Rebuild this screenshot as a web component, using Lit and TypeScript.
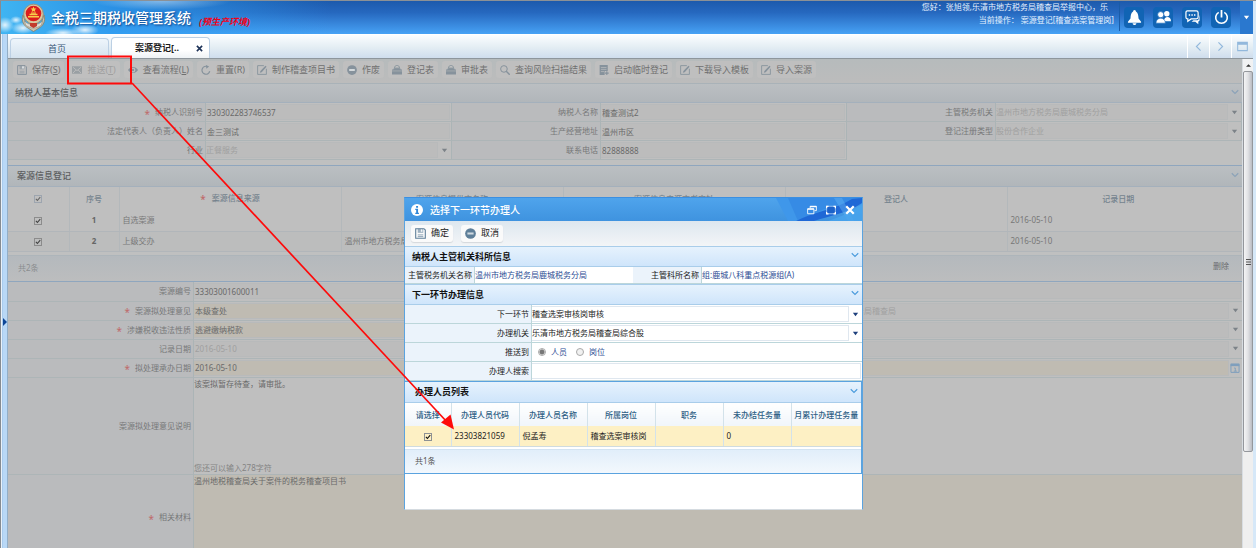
import { LitElement, html, svg, css, nothing } from "lit";
import { customElement } from "lit/decorators.js";
import { classMap } from "lit/directives/class-map.js";

const icons: Record<string, unknown> = {
  save: svg`<path d="M1 1h12l2 2v12H1z" fill="none" stroke="currentColor" stroke-width="1.600"/><path d="M4 1h8v6H4z" fill="currentColor" opacity=".6"/><path d="M8.500 2h2.200v3.500H8.500z" fill="#f4f6f8"/><path d="M4 10h8M4 12.500h8" stroke="currentColor" stroke-width="1"/>`,
  mail: svg`<path d="M0 2h16v12H0z" fill="currentColor"/><path d="M1.500 3.500 8 9l6.500-5.500M1.500 13 6 8M14.500 13 10 8" fill="none" stroke="#c2c2c2" stroke-width="1.300"/>`,
  eye: svg`<path d="M0 8C4 1.500 12 1.500 16 8 12 14.500 4 14.500 0 8z" fill="currentColor"/><circle cx="8" cy="8" r="3.800" fill="#c2c2c2"/><circle cx="8" cy="8" r="2" fill="currentColor"/>`,
  reset: svg`<path d="M14 10A6.300 6.300 0 1 1 9 2.200" fill="none" stroke="currentColor" stroke-width="1.900"/><path d="M8 0l5 2.500-4.500 3.500z" fill="currentColor"/>`,
  edit: svg`<path d="M15 6v9H1V1h10" fill="none" stroke="currentColor" stroke-width="1.400"/><path d="M4.500 12.500l1-3L13.500 1l1.800 1.700L7.500 11.500z" fill="currentColor"/>`,
  minus: svg`<circle cx="8" cy="8" r="7.800" fill="currentColor"/><path d="M3.500 6.500h9v3h-9z" fill="#eef1f3" opacity=".8"/>`,
  print: svg`<path d="M4 5c0-6 8-6 8 0z" fill="none" stroke="currentColor" stroke-width="1.400"/><path d="M3 5h10l1 2h2v8H0V7h2z" fill="currentColor"/><path d="M0 9.500h16" stroke="#c2c2c2" stroke-width=".8"/>`,
  search: svg`<circle cx="6.300" cy="6.300" r="5.300" fill="none" stroke="currentColor" stroke-width="1.600"/><path d="M10 10l5.500 5.500" stroke="currentColor" stroke-width="2.200"/>`,
  list: svg`<path d="M1 0h13v9.500H9V16H1z" fill="currentColor"/><path d="M3 4h9M3 7h9M3 10.500h5" stroke="#c2c2c2"/><path d="M12.500 10v6M9.500 13h6" stroke="currentColor" stroke-width="1.800"/>`,
  bell: svg`<path d="M8 0c1 0 1.500.8 1.500 1.600C12 3 12 6 12.300 9L15 12.500v1H1v-1L3.700 9C4 6 4 3 6.500 1.600 6.500.8 7 0 8 0zM6 14h4c0 2.500-4 2.500-4 0z" fill="#fff"/>`,
  users: svg`<circle cx="11.500" cy="4" r="2.900" fill="#fff"/><path d="M8.500 12c0-6 7.500-6 7.500 0z" fill="#fff"/><circle cx="5" cy="5" r="3.300" fill="#fff" stroke="#1466b8" stroke-width=".8"/><path d="M0 14c0-7 10-7 10 0z" fill="#fff" stroke="#1466b8" stroke-width=".6"/>`,
  chat: svg`<path d="M2.500 1h9.500c1.200 0 2 .8 2 2v4.500c0 1.200-.8 2-2 2H6.500L3 12V9.500c-1.500 0-2-.8-2-2V3c0-1.200.5-2 1.500-2z" fill="none" stroke="#fff" stroke-width="1.300"/><path d="M4 5.300h1.500M6.800 5.300h1.500M9.600 5.300h1.500" stroke="#fff" stroke-width="1.400"/><path d="M15.500 5v6c0 .8-.5 1.200-1.300 1.200v3L11 12.400H7l2-1.600h4.500c.7 0 1-.5 1-1z" fill="#fff"/>`,
  power: svg`<path d="M5 2.500a6.200 6.200 0 1 0 6 0" fill="none" stroke="#fff" stroke-width="1.700"/><path d="M8 0v8" stroke="#fff" stroke-width="1.900"/>`,
  left: svg`<path d="M11 2 5 8l6 6" fill="none" stroke="currentColor" stroke-width="1.700"/>`,
  right: svg`<path d="M5 2l6 6-6 6" fill="none" stroke="currentColor" stroke-width="1.700"/>`,
  down: svg`<path d="M1.500 4.500 8 11l6.500-6.500" fill="none" stroke="currentColor" stroke-width="2.200"/>`,
  window: svg`<path d="M1 2h14v12H1z" fill="none" stroke="currentColor" stroke-width="1.500"/><path d="M1 2h14v3.500H1z" fill="currentColor"/>`,
  caret: svg`<path d="M2 4h12l-6 8z" fill="currentColor"/>`,
  calendar: svg`<path d="M1.500 2h13v13h-13z" fill="none" stroke="currentColor" stroke-width="1.600"/><path d="M1 1h14v4H1z" fill="currentColor"/><path d="M6.500 8H8.500v5M6 13h5" fill="none" stroke="currentColor" stroke-width="1.400"/>`,
  info: svg`<circle cx="8" cy="8" r="8" fill="#fff"/><path d="M6.800 2.600h2.600v2.300H6.800zM5.700 6.300h3.700v5.400h1.200v1.600H5.700v-1.600h1.200V7.900H5.700z" fill="#2f86d8"/>`,
  restore: svg`<path d="M5 5V2h10v7h-3" fill="none" stroke="#fff" stroke-width="1.400"/><path d="M1 6h10v8H1z" fill="none" stroke="#fff" stroke-width="1.400"/><path d="M1 6.500h10M5 2.500h10" stroke="#fff" stroke-width="2"/>`,
  maximize: svg`<path d="M1 2h14v12H1z" fill="#1d62c9" stroke="#b9dafa" stroke-width="1.200"/><path d="M1 5V2h3M12 2h3v3M15 11v3h-3M4 14H1v-3" fill="none" stroke="#fff" stroke-width="2"/>`,
  close: svg`<path d="M2 2l12 12M14 2 2 14" stroke="currentColor" stroke-width="3.600"/>`,
};

const icon = (name: string, cls = "") =>
  html`<svg class="icon ${cls}" viewBox="0 0 16 16" aria-hidden="true">${icons[name]}</svg>`;

interface Field {
  id: string;
  label: string;
  value: string;
  kind?: "text" | "select" | "date";
  required?: boolean;
  disabled?: boolean;
  cls?: string;
}

const tools: [string, string, string?][] = [
  ["save", "保存", "S"],
  ["mail", "推送", "T"],
  ["eye", "查看流程", "L"],
  ["reset", "重置(R)"],
  ["edit", "制作稽查项目书"],
  ["minus", "作废"],
  ["print", "登记表"],
  ["print", "审批表"],
  ["search", "查询风险扫描结果"],
  ["list", "启动临时登记"],
  ["edit", "下载导入模板"],
  ["edit", "导入案源"],
];

const taxpayer: Field[] = [
  { id: "taxid", label: "纳税人识别号", value: "330302283746537", required: true },
  { id: "taxname", label: "纳税人名称", value: "稽查测试2" },
  { id: "org", label: "主管税务机关", value: "温州市地方税务局鹿城税务分局", kind: "select", disabled: true },
  { id: "legal", label: "法定代表人（负责人）姓名", value: "金三测试" },
  { id: "addr", label: "生产经营地址", value: "温州市区" },
  { id: "regtype", label: "登记注册类型", value: "股份合作企业", kind: "select", disabled: true },
  { id: "trade", label: "行业", value: "正餐服务", kind: "select", disabled: true },
  { id: "phone", label: "联系电话", value: "82888888" },
];

const sources = [
  { no: 1, source: "自选案源", provider: "", date: "2016-05-10" },
  { no: 2, source: "上级交办", provider: "温州市地方税务局", date: "2016-05-10" },
];

@customElement("app-root")
export class AppRoot extends LitElement {
  static styles = css`
    :host {
      display: block;
      height: 100vh;
      overflow: hidden;
      position: relative;
      font: 8px/12px "Noto Sans", "Noto Sans CJK SC", sans-serif;
      color: #787878;
    }
    * { box-sizing: border-box; }
    button, input, select, textarea {
      font: inherit;
      color: inherit;
      margin: 0;
      padding: 0;
      border: 0;
      border-radius: 0;
      background: none;
      appearance: none;
      min-width: 0;
      outline-offset: -1px;
    }
    select, input:disabled { opacity: 1; }
    .icon { width: 11px; height: 11px; flex: none; display: block; }

    .shell {
      height: 100%;
      display: grid;
      grid-template-columns: 8px 1fr 3px;
      grid-template-rows: 33px 24px 1fr;
      border-top: 1px solid #8c9196;
      background: #dcebf8;
    }
    .header {
      grid-column: 1 / 3;
      display: flex;
      align-items: stretch;
      color: #fff;
      position: relative;
      border-left: 1px solid #858b92;
      background: linear-gradient(90deg, #3fb4f2 0, #2d9df0cc 110px, #2b8ae600 330px),
        linear-gradient(#1d5aac, #2668bf 35%, #47a2f5);
    }
    .sky { position: absolute; left: 0; top: 0; width: 260px; height: 33px; }
    .brand { position: relative; display: flex; align-items: center; padding-left: 20px; flex: 1; }
    .emblem { width: 25px; height: 29px; }
    .brand h1 {
      margin: 0 8px 0 5px;
      font-size: 14px;
      line-height: 20px;
      font-weight: 500;
      text-shadow: 1px 1px 2px #0a3c80;
    }
    .env { font: italic bold 9px/12px "Noto Sans", "Noto Sans CJK SC", sans-serif; color: #f00018; padding-top: 9px; }
    .greet { text-align: right; padding: 0 5px 0 0; border-right: 1px solid #1a5ca8; color: #e6f2ff; margin-bottom: 3px; }
    .greet p { margin: 0 0 1px; }
    .greet p:first-child { padding-right: 6px; }
    .quick { display: flex; gap: 9px; align-items: center; padding: 0 9px 0 4px; }
    .quick button {
      width: 20px; height: 21px; border-radius: 4px; background: #1164b4;
      display: grid; place-items: center;
    }
    .quick .icon { width: 15px; height: 15px; }
    .more { width: 13px; background: #2a78cf; display: grid; place-items: center; }
    .more .icon { width: 7px; height: 7px; color: #fff; }
    .edge { grid-column: 3; background: #d6e8f8; }

    .rail {
      grid-row: 2 / 4;
      grid-column: 1;
      background: linear-gradient(90deg, #858b92 0 1px, #e9f2fa 1px 2px, #a8cbee 2px 3px, #b9d8f6 3px);
      border-right: 1px solid #93aec6;
      display: flex;
      align-items: center;
    }
    .rail button { width: 7px; height: 10px; margin-top: 62px; padding-left: 3px; color: #0c4596; }
    .rail svg { width: 4px; height: 8px; display: block; }

    .tabs {
      display: flex;
      align-items: flex-end;
      gap: 2px;
      padding-left: 2px;
      border-top: 1px solid #fff;
      background: linear-gradient(#fbfdff, #e3edf3 55%, #cfdded);
      font-size: 9px;
    }
    .tab {
      display: flex; align-items: center; justify-content: center;
      width: 99px; height: 20px;
      border: 1px solid #bcd0e4; border-bottom: 0; border-radius: 4px 4px 0 0;
      background: linear-gradient(#eef5fb, #d4e2ee);
      color: #3c5878;
    }
    .tab:first-child { padding-right: 5px; }
    .tab.on { background: linear-gradient(#fff 60%, #eef2f5); height: 21px; font-weight: bold; color: #1c1c1c; justify-content: space-between; padding: 0 6px 0 23px; }
    .tab .icon { width: 7px; height: 7px; color: #1e3358; }
    .tabnav { margin-left: auto; display: flex; align-self: stretch; color: #92b8dc; }
    .tabnav button { width: 22px; border-left: 1px solid #fff; display: grid; place-items: center; }

    .work { display: grid; grid-template-columns: 1fr 11px; min-height: 0; overflow: hidden; border-top: 1px solid #8e969c; }
    .page { display: flex; flex-direction: column; min-height: 0; overflow: hidden; background: #bfc0c0; }
    .bar { display: flex; align-items: center; gap: 4px; height: 24px; padding: 0 5px 3px; flex: none; background: linear-gradient(#b6bbbc, #bcbcbc); }
    .tool {
      display: flex; align-items: center; gap: 5px; height: 17px; padding: 0 4px; white-space: nowrap;
      border-radius: 3px; background: #bfbfbf; color: #707070; font-size: 9px;
    }
    .tool .icon { color: #86929c; width: 10px; height: 10px; }
    .tool:disabled { color: #a0a0a0; }
    .tool:disabled .icon { color: #999fa3; }

    .sec {
      display: flex; align-items: center; justify-content: space-between; height: 20px; flex: none;
      margin: 0; padding: 0 3px 0 7px; font-size: 9px; font-weight: 500; line-height: 12px; color: #5d5f61;
      background: linear-gradient(#bbbfc2, #b1b6ba);
      border-top: 1px solid #a9b2b8; border-bottom: 1px solid #a4b0bc;
    }
    .sec .icon { width: 8px; height: 8px; color: #8ba2b8; margin-bottom: 3px; }
    .sec.blue { border-top-color: #8fa6be; height: 22px; padding-left: 9px; }
    h2 { font: inherit; margin: 0; }

    .form { display: grid; flex: none; }
    .f1 { grid-template-columns: 197fr 247fr 148fr 247fr 148fr 247fr; margin-bottom: 5px; }
    .lab {
      display: flex; align-items: center; justify-content: flex-end; gap: 5px; height: 19px; padding: 0 2px 0 4px;
      background: #babbbd; border-bottom: 1px solid #adb5b7; white-space: nowrap; color: #777879;
    }
    .req { color: #bf6a6a; font-size: 10px; padding-top: 3px; }
    .val { display: flex; align-items: center; height: 19px; border-left: 1px solid #abb4b6; border-bottom: 1px solid #adb5b7; background: #bfbfbf; padding: 1px 1px 1px 0; }
    .f1 .val { border-right: 1px solid #abb4b6; }
    .val input, .val select { flex: 1; height: 16px; padding: 0 1px; border: 1px solid #b8babb; border-left: 0; background: #bcbcbc; color: #6a6a6a; }
    .val select { padding: 0; }
    .val input.req-in, .val select.req-in { background: #bfbbb2; }
    .val :disabled { color: #a0a0a0; }
    .drop { width: 12px; display: grid; place-items: center; color: #7c8288; }
    .drop .icon { width: 7px; height: 7px; }
    .drop .cal { width: 10px; height: 10px; color: #7f9fbd; }

    table { border-collapse: collapse; table-layout: fixed; width: 100%; flex: none; }
    th, td { padding: 0 3px; text-align: left; overflow: hidden; white-space: nowrap; }
    .grid th { height: 23px; text-align: center; color: #75838e; font-weight: 500; background: #bfbfbf; }
    .grid th, .grid td { border-right: 1px solid #b3b8bb; }
    .grid td { height: 21px; border-bottom: 1px solid #b1b6ba; background: #bfbfbf; }
    .grid tr:nth-child(2) td { background: #bcbdbd; height: 20px; }
    .grid .c { text-align: center; }
    .grid .tail { border-right: 0; }
    .c1 { width: 61px; } .c2 { width: 50px; } .c8 { width: 13px; }
    .grid .req { vertical-align: middle; margin-right: 4px; }
    .num { font-weight: bold; color: #666; }
    input[type="checkbox"] {
      width: 8px; height: 8px; display: inline-block; vertical-align: middle; border: 1px solid #8d9194;
      background: url("data:image/svg+xml,%3Csvg xmlns='http://www.w3.org/2000/svg' viewBox='0 0 8 8'%3E%3Cpath d='M1.200 3.800 3.200 6 7 1.500' fill='none' stroke='%23111' stroke-width='1.500'/%3E%3C/svg%3E") center / 6px 6px no-repeat;
    }
    .grid input[type="checkbox"] { border-color: #777; opacity: .7; }
    .grid thead input[type="checkbox"] { border-color: #7c8da0; opacity: .5; }
    .foot { display: flex; align-items: center; justify-content: space-between; height: 27px; flex: none; margin-top: 3px; padding: 0 13px 0 10px; border-top: 1px solid #adb5ba; border-bottom: 1px solid #8fa6be; background: linear-gradient(#b4b9bd, #bcbdbe); color: #8b8e90; }
    .foot button { color: #6a6c6e; padding-bottom: 4px; }

    .f3 { grid-template-columns: 185fr 340fr 322fr 387fr; flex: 1; grid-template-rows: 20px repeat(4, 19px) 97px minmax(86px, 1fr); }
    .f3 .lab { height: auto; }
    .f3 .val { height: auto; }
    .f3 .span { grid-column: 2 / 5; }
    .f3 .gap { border-left: 0; }
    .f3 .memo { flex-direction: column; align-items: stretch; padding: 0; }
    .memo textarea { flex: 1; resize: none; display: block; color: #6a6a6a; overflow: hidden; }
    .memo.need { background: #bfbbb2; }
    .hint { color: #848484; }

    .scroll { display: flex; flex-direction: column; background: #efefef; border-left: 1px solid #d8dde2; }
    .scroll button { height: 12px; display: grid; place-items: center; color: #333; background: #f1f2f3; }
    .scroll .icon { width: 5px; height: 5px; }
    .thumb { height: 381px; border: 1px solid #94979c; border-radius: 2px; background: linear-gradient(90deg, #f4f4f5, #e0e1e4 50%, #b9bbc2); display: grid; place-items: center; }
    .thumb .icon { width: 5px; height: 6px; color: #555; }

    .dialog {
      position: absolute; left: calc(50% - 224px); top: 197px; width: 459px; height: 313px; padding: 0;
      border: 1px solid #5ba3df; border-top-color: #3c8fe0; border-bottom: 1px solid #d5dbe0; background: #fff; color: #333;
      display: flex; flex-direction: column;
    }
    .dhead { position: relative; display: flex; align-items: center; gap: 7px; height: 23px; padding: 0 7px 0 6px; flex: none; background: linear-gradient(#4fa4ec, #3f93df); color: #fff; }
    .dhead h2 { position: relative; flex: 1; font-size: 10px; line-height: 14px; font-weight: 500; }
    .dhead .icon { width: 12px; height: 12px; position: relative; }
    .dhead button .icon { width: 10px; height: 10px; }
    .dhead button + button { margin-left: 2px; }
    .facets { position: absolute; right: 0; top: 0; width: 94px; height: 23px; }
    .dialog .bar { background: linear-gradient(#dde7ef, #f3f5f7); height: 25px; gap: 8px; padding: 0 6px 1px; }
    .dialog .tool { background: #fafafa; color: #222; box-shadow: 0 1px 1px #d4d8dc; }
    .dialog .tool .icon { color: #5f7f99; width: 11px; height: 11px; }
    .dialog .sec { height: 21px; color: #111; font-weight: bold; background: linear-gradient(#e6f2fd, #cfe5fb); border-color: #a9cdea; }
    .dialog .sec .icon { color: #4a9bdc; }
    .dialog .lab { background: #ebf3fb; border-color: #bcd6da; color: #222; }
    .dialog .val { background: #fff; border-color: #bcd6da; color: #2d4d94; }
    .dialog .val select, .dialog .val input[type="text"] { background: #fff; border-color: #dfe7ef; color: #222; }
    .d1 { grid-template-columns: 69px 159px 68px 1fr; }
    .d1 .lab, .d1 .val { height: 17px; }
    .d1 .val { padding: 0; white-space: nowrap; }
    .d2 { grid-template-columns: 126px 1fr; }
    .dialog .drop { color: #1d3f7c; }
    .radios { gap: 9px; }
    .dialog .radios { padding-left: 6px; }
    .radios label { display: flex; align-items: center; gap: 5px; }
    .val .r { flex: none; width: 8px; height: 8px; border-radius: 50%; border: 1px solid #a9a9a9; padding: 0; background: #f1f1f1; }
    .val .r:checked { background: radial-gradient(#777 0 2px, #eee 3px); }
    .people { border: 1px solid #5ba3df; border-width: 1px 1px 1px 0; }
    .dialog .people .sec { border-top: 0; padding-left: 10px; }
    .people th { height: 23px; text-align: center; color: #2f5f85; font-weight: 500; background: linear-gradient(#fff, #f0f5fa); padding: 0; }
    .people th, .people td { border-right: 1px solid #d3e2ea; }
    .people td { height: 20px; background: #fdf0c4; border-bottom: 1px solid #cfdbe0; color: #222; }
    .people th:last-child, .people td:last-child { border-right: 0; }
    .people td:first-child { text-align: center; }
    .p1 { width: 46px; } .p2 { width: 68px; }
    .dialog .foot { height: 24px; margin-top: 2px; border-top: 1px solid #d3e3f1; border-bottom: 0; background: linear-gradient(#e1eefa, #f3f8fd); color: #555; }

    .mark { position: absolute; left: 0; top: 0; width: 460px; height: 440px; pointer-events: none; }
  `;

  private tool([name, text, key]: [string, string, string?], disabled = false) {
    return html`<button class="tool" ?disabled=${disabled}>${icon(name)}<span>${text}${key ? html`(<u>${key}</u>)` : nothing}</span></button>`;
  }

  private section(title: string, blue = false) {
    return html`<div class=${classMap({ sec: true, blue })}><h2>${title}</h2>${icon("down")}</div>`;
  }

  private label(id: string, text: string, required = false) {
    return html`<label class="lab" for=${id}>${required ? html`<span class="req">*</span>` : nothing}<span>${text}</span></label>`;
  }

  private control(f: Field) {
    const cls = f.required && f.id !== "taxid" ? "req-in" : "";
    if (f.kind === "select") {
      return html`<select id=${f.id} class=${cls} aria-label=${f.label || "处理机关"} ?disabled=${f.disabled}><option>${f.value}</option></select><span class="drop">${icon("caret")}</span>`;
    }
    return html`<input type="text" id=${f.id} class=${cls} .value=${f.value} ?disabled=${f.disabled} />${f.kind === "date" ? html`<span class="drop">${icon("calendar", "cal")}</span>` : nothing}`;
  }

  private field(f: Field) {
    return html`${this.label(f.id, f.label, f.required)}<div class="val ${f.cls ?? ""}">${this.control(f)}</div>`;
  }

  private renderHeader() {
    return html`<header class="header">
        <svg class="sky" viewBox="0 0 260 33" aria-hidden="true">
          <defs><radialGradient id="cl"><stop offset="0" stop-color="#fff" stop-opacity=".85"/><stop offset="1" stop-color="#fff" stop-opacity="0"/></radialGradient></defs>
          <g fill="url(#cl)"><ellipse cx="4" cy="24" rx="9" ry="8"/><ellipse cx="15" cy="19" rx="6" ry="4"/><ellipse cx="22" cy="27" rx="12" ry="6"/><ellipse cx="84" cy="29" rx="14" ry="6"/><ellipse cx="62" cy="32" rx="18" ry="5"/><ellipse cx="160" cy="0" rx="70" ry="9" opacity=".5"/></g>
        </svg>
        <div class="brand">
          <svg class="emblem" viewBox="0 0 25 29" aria-hidden="true">
            <path d="M2 12c-2 6 1 11 5 13l5.500 3.500L18 25c4-2 7-7 5-13l-3 9H5z" fill="#c9c2b0" stroke="#8d7a58" stroke-width=".7"/>
            <circle cx="12.500" cy="11" r="9.800" fill="#d9c9a0" stroke="#a0937a"/>
            <circle cx="12.500" cy="10.500" r="7.800" fill="#dc1c1c"/>
            <path d="M12.500 3.500l.9 1.900 2 .2-1.500 1.400.4 2-1.800-1-1.800 1 .4-2L9.600 5.600l2-.2zM7 13h11v1.500H7zM8.500 10.800h8v1.400h-8zM10 9.600h5v1h-5z" fill="#f7cf4a"/>
            <path d="M3.500 18c5 5 13 5 18 0l-1 4c-5 4-11 4-16 0z" fill="#e0ddd4" stroke="#8f8a7c" stroke-width=".6"/>
            <path d="M9 20h7v3l-3.500 2L9 23z" fill="#c23b2c"/>
          </svg>
          <h1>金税三期税收管理系统</h1><span class="env">(预生产环境)</span>
        </div>
        <div class="greet"><p>您好：张旭领,乐清市地方税务局稽查局举报中心，乐</p><p>当前操作： 案源登记[稽查选案管理岗]</p></div>
        <nav class="quick">
          <button aria-label="提醒">${icon("bell")}</button><button aria-label="用户">${icon("users")}</button><button aria-label="消息">${icon("chat")}</button><button aria-label="退出">${icon("power")}</button>
        </nav>
        <button class="more" aria-label="更多">${icon("caret")}</button>
      </header>`;
  }

  private renderSources() {
    return html`<table class="grid">
      <colgroup><col class="c1" /><col class="c2" /><col /><col /><col /><col /><col /><col class="c8" /></colgroup>
      <thead><tr>
        <th><input type="checkbox" checked aria-label="全选" /></th><th>序号</th>
        <th><span class="req">*</span> 案源信息来源</th><th>案源信息提供方名称</th><th>案源信息来源方书字址</th><th>登记人</th><th class="tail">记录日期</th><th class="tail"></th>
      </tr></thead>
      <tbody>${sources.map((s) => html`<tr>
        <td class="c"><input type="checkbox" checked aria-label="选择第${s.no}行" /></td><td class="c num">${s.no}</td>
        <td>${s.source}</td><td>${s.provider}</td><td></td><td></td><td class="tail">${s.date}</td><td class="tail"></td>
      </tr>`)}</tbody>
    </table>
    <div class="foot"><span>共2条</span><button>删除</button></div>`;
  }

  private renderCase() {
    return html`<div class="form f3">
      ${this.field({ id: "caseno", label: "案源编号", value: "33303001600011", cls: "span" })}
      ${this.field({ id: "opinion", label: "案源拟处理意见", value: "本级查处", required: true })}
      <div class="lab gap"></div><div class="val">${this.control({ id: "dept", label: "", value: "务局稽查局", kind: "select", disabled: true })}</div>
      ${this.field({ id: "nature", label: "涉嫌税收违法性质", value: "逃避缴纳税款", required: true })}
      <div class="lab gap"></div><div class="val">${this.control({ id: "dept2", label: "", value: "", kind: "select", disabled: true })}</div>
      ${this.field({ id: "rdate", label: "记录日期", value: "2016-05-10", disabled: true })}
      <div class="lab gap"></div><div class="val">${this.control({ id: "dept3", label: "", value: "", kind: "select", disabled: true })}</div>
      ${this.field({ id: "hdate", label: "拟处理承办日期", value: "2016-05-10", required: true, kind: "date", cls: "span" })}
      ${this.label("note", "案源拟处理意见说明")}
      <div class="val memo span"><textarea id="note" .value=${"该案拟暂存待查，请审批。"}></textarea><span class="hint">您还可以输入278字符</span></div>
      ${this.label("files", "相关材料", true)}
      <div class="val memo need span"><textarea id="files" .value=${"温州地税稽查局关于案件的税务稽查项目书"}></textarea></div>
    </div>`;
  }

  private renderDialog() {
    return html`<section class="dialog" role="dialog" aria-label="选择下一环节办理人">
      <div class="dhead">
        <svg class="facets" viewBox="0 0 94 23" preserveAspectRatio="none" aria-hidden="true"><path d="M8 0h86v8C62 8 50 14 34 23H20z" fill="#3f97ea"/><path d="M20 0h74v4C60 6 45 16 30 23z" fill="#2d80e0" opacity=".5"/><path d="M28 23C45 14 66 12 84 1l10-1v5C78 16 60 18 46 23z" fill="#1f68d6"/><path d="M66 0h8l12 23h-6z" fill="#62b4f3" opacity=".45"/><path d="M94 6v17H60C72 19 84 14 94 6z" fill="#48a5ee" opacity=".8"/></svg>
        ${icon("info")}<h2>选择下一环节办理人</h2>
        <button aria-label="还原">${icon("restore")}</button><button aria-label="最大化">${icon("maximize")}</button><button aria-label="关闭">${icon("close")}</button>
      </div>
      <div class="bar">${this.tool(["save", "确定"])}${this.tool(["minus", "取消"])}</div>
      ${this.section("纳税人主管机关科所信息")}
      <div class="form d1">
        <div class="lab">主管税务机关名称</div><div class="val">温州市地方税务局鹿城税务分局</div>
        <div class="lab">主管科所名称</div><div class="val">组:鹿城八科重点税源组(A)</div>
      </div>
      ${this.section("下一环节办理信息")}
      <div class="form d2">
        ${this.field({ id: "next", label: "下一环节", value: "稽查选案审核岗审核", kind: "select" })}
        ${this.field({ id: "office", label: "办理机关", value: "乐清市地方税务局稽查局综合股", kind: "select" })}
        <div class="lab">推送到</div>
        <div class="val radios">
          <label><input class="r" type="radio" name="target" checked />人员</label>
          <label><input class="r" type="radio" name="target" />岗位</label>
        </div>
        ${this.field({ id: "find", label: "办理人搜索", value: "" })}
      </div>
      <div class="people">
        ${this.section("办理人员列表")}
        <table>
          <colgroup><col class="p1" /><col class="p2" /><col class="p2" /><col class="p2" /><col class="p2" /><col class="p2" /><col /></colgroup>
          <thead><tr>${["请选择", "办理人员代码", "办理人员名称", "所属岗位", "职务", "未办结任务量", "月累计办理任务量"].map((t) => html`<th>${t}</th>`)}</tr></thead>
          <tbody><tr><td><input type="checkbox" checked aria-label="选择倪孟寿" /></td><td>23303821059</td><td>倪孟寿</td><td>稽查选案审核岗</td><td></td><td>0</td><td></td></tr></tbody>
        </table>
        <div class="foot"><span>共1条</span></div>
      </div>
    </section>`;
  }

  render() {
    return html`
      <div class="shell">
        ${this.renderHeader()}
        <div class="edge"></div>
        <div class="rail"><button aria-label="展开"><svg viewBox="0 0 5 10"><path d="M0 0l5 5-5 5z" fill="currentColor"/></svg></button></div>
        <div class="tabs">
          <button class="tab">首页</button>
          <button class="tab on"><span>案源登记[..</span>${icon("close")}</button>
          <div class="tabnav"><button aria-label="向左">${icon("left")}</button><button aria-label="向右">${icon("right")}</button><button aria-label="窗口">${icon("window")}</button></div>
        </div>
        <div class="edge"></div>
        <main class="work">
          <div class="page">
            <div class="bar">${tools.map((t) => this.tool(t, t[0] === "mail"))}</div>
            ${this.section("纳税人基本信息")}
            <div class="form f1">${taxpayer.map((f) => this.field(f))}</div>
            ${this.section("案源信息登记", true)}
            ${this.renderSources()}
            ${this.renderCase()}
          </div>
          <div class="scroll">
            <button aria-label="向上滚动"><svg class="icon" viewBox="0 0 8 8"><path d="M0 6l4-4 4 4z" fill="currentColor"/></svg></button>
            <div class="thumb"><svg class="icon" viewBox="0 0 5 6"><path d="M0 .5h5M0 3h5M0 5.500h5" stroke="currentColor"/></svg></div>
          </div>
        </main>
        <div class="edge"></div>
      </div>
      ${this.renderDialog()}
      <svg class="mark" viewBox="0 0 460 440" aria-hidden="true">
        <rect x="68" y="56.500" width="63" height="27" fill="none" stroke="#fe0a0a" stroke-width="2"/>
        <path d="M132 83 447 422" stroke="#fe0a0a" stroke-width="1.700"/>
        <path d="M454 429.500 441 422.500 450.500 414.500z" fill="#fe0a0a"/>
      </svg>`;
  }
}
